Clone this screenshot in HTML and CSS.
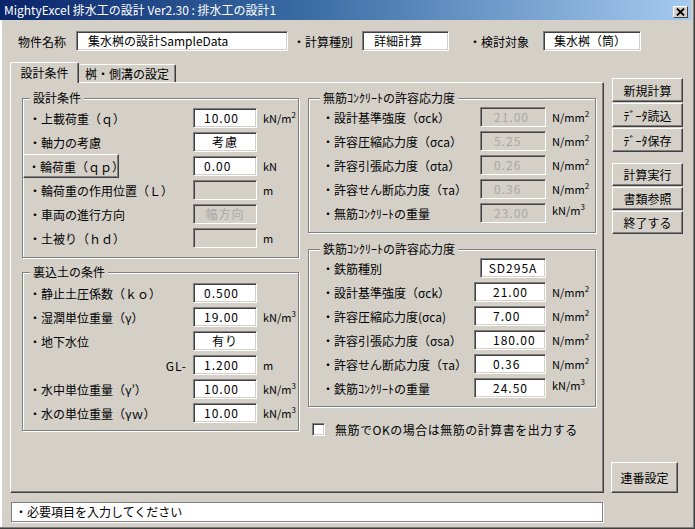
FILE: index.html
```html
<!DOCTYPE html>
<html lang="ja">
<head>
<meta charset="utf-8">
<title>MightyExcel 排水工の設計</title>
<link rel="stylesheet" href="styles.css">
</head>
<body>
<div class="window">
  <div class="titlebar">
    <span class="title">MightyExcel 排水工の設計 Ver2.30 : 排水工の設計1</span>
    <span class="close"><svg width="9" height="8" viewBox="0 0 9 8"><path d="M1 0.5 L8 7.5 M8 0.5 L1 7.5" stroke="#000" stroke-width="1.8" fill="none"/></svg></span>
  </div>

  <div class="header">
    <span class="hl hl1">物件名称</span>
    <span class="hf hf1">集水桝の設計SampleData</span>
    <span class="hl hl2">・計算種別</span>
    <span class="hf hf2">詳細計算</span>
    <span class="hl hl3">・検討対象</span>
    <span class="hf hf3">集水桝（筒）</span>
  </div>

  <div class="body">
    <div class="tabarea">
      <div class="tabs">
        <span class="tab tab-on">設計条件</span>
        <span class="tab tab-off">桝・側溝の設定</span>
      </div>
      <div class="panel">
        <div class="col">
          <div class="group g1">
            <span class="legend">設計条件</span>
            <div class="row r1"><span class="lbl">・上載荷重（ｑ）</span><span class="field num">10.00</span><span class="unit">kN/m<sup>2</sup></span></div>
            <div class="row r1"><span class="lbl">・軸力の考慮</span><span class="field ctr">考慮</span><span class="unit"></span></div>
            <div class="row r1"><span class="btn wbtn">・輪荷重（ｑｐ）</span><span class="field num">0.00</span><span class="unit">kN</span></div>
            <div class="row r1"><span class="lbl">・輪荷重の作用位置（Ｌ）</span><span class="field dis"></span><span class="unit">m</span></div>
            <div class="row r1"><span class="lbl">・車両の進行方向</span><span class="field dis ctr">幅方向</span><span class="unit"></span></div>
            <div class="row r1"><span class="lbl">・土被り（ｈｄ）</span><span class="field dis"></span><span class="unit">m</span></div>
          </div>
          <div class="group g2">
            <span class="legend">裏込土の条件</span>
            <div class="row r1"><span class="lbl">・静止土圧係数（ｋｏ）</span><span class="field num">0.500</span><span class="unit"></span></div>
            <div class="row r1"><span class="lbl">・湿潤単位重量（γ）</span><span class="field num">19.00</span><span class="unit">kN/m<sup>3</sup></span></div>
            <div class="row r1"><span class="lbl">・地下水位</span><span class="field ctr">有り</span><span class="unit"></span></div>
            <div class="row r1"><span class="lbl gl">GL-</span><span class="field num">1.200</span><span class="unit">m</span></div>
            <div class="row r1"><span class="lbl">・水中単位重量（γ’）</span><span class="field num">10.00</span><span class="unit">kN/m<sup>3</sup></span></div>
            <div class="row r1"><span class="lbl">・水の単位重量（γｗ）</span><span class="field num">10.00</span><span class="unit">kN/m<sup>3</sup></span></div>
          </div>
        </div>
        <div class="col">
          <div class="group g3">
            <span class="legend legend-r">無筋ｺﾝｸﾘｰﾄの許容応力度</span>
            <div class="row r3"><span class="lbl lr">・設計基準強度（σck）</span><span class="field dis num3">21.00</span><span class="unit">N/mm<sup>2</sup></span></div>
            <div class="row r3"><span class="lbl lr">・許容圧縮応力度（σca）</span><span class="field dis num3">5.25</span><span class="unit">N/mm<sup>2</sup></span></div>
            <div class="row r3"><span class="lbl lr">・許容引張応力度（σta）</span><span class="field dis num3">0.26</span><span class="unit">N/mm<sup>2</sup></span></div>
            <div class="row r3"><span class="lbl lr">・許容せん断応力度（τa）</span><span class="field dis num3">0.36</span><span class="unit">N/mm<sup>2</sup></span></div>
            <div class="row r3"><span class="lbl lr">・無筋ｺﾝｸﾘｰﾄの重量</span><span class="field dis num3">23.00</span><span class="unit up">kN/m<sup>3</sup></span></div>
          </div>
          <div class="group g4">
            <span class="legend legend-r">鉄筋ｺﾝｸﾘｰﾄの許容応力度</span>
            <div class="row r4"><span class="lbl lr">・鉄筋種別</span><span class="field ctr narrow">SD295A</span><span class="unit"></span></div>
            <div class="row r4"><span class="lbl lr">・設計基準強度（σck）</span><span class="field num4">21.00</span><span class="unit">N/mm<sup>2</sup></span></div>
            <div class="row r4"><span class="lbl lr">・許容圧縮応力度(σca)</span><span class="field num4">7.00</span><span class="unit">N/mm<sup>2</sup></span></div>
            <div class="row r4"><span class="lbl lr">・許容引張応力度（σsa）</span><span class="field num4">180.00</span><span class="unit">N/mm<sup>2</sup></span></div>
            <div class="row r4"><span class="lbl lr">・許容せん断応力度（τa）</span><span class="field num4">0.36</span><span class="unit">N/mm<sup>2</sup></span></div>
            <div class="row r4"><span class="lbl lr">・鉄筋ｺﾝｸﾘｰﾄの重量</span><span class="field num4">24.50</span><span class="unit up">kN/m<sup>3</sup></span></div>
          </div>
          <div class="check">
            <span class="box"></span>
            <span class="ctext">無筋でOKの場合は無筋の計算書を出力する</span>
          </div>
        </div>
      </div>
    </div>

    <div class="side">
      <div class="bgroup bg1">
        <span class="btn sbtn">新規計算</span>
        <span class="btn sbtn">ﾃﾞｰﾀ読込</span>
        <span class="btn sbtn">ﾃﾞｰﾀ保存</span>
      </div>
      <div class="bgroup bg2">
        <span class="btn sbtn2">計算実行</span>
        <span class="btn sbtn2">書類参照</span>
        <span class="btn sbtn2">終了する</span>
      </div>
      <span class="btn renban">連番設定</span>
    </div>
  </div>

  <div class="status">・必要項目を入力してください</div>
</div>
</body>
</html>
```

FILE: styles.css
```css
* { box-sizing: border-box; }

body {
  margin: 0;
  font-family: "Noto Sans CJK JP", "Noto Sans", sans-serif;
  font-size: 12px;
  color: #000;
  background: #d4d0c8;
}

.window {
  width: 695px;
  height: 529px;
  background: #d4d0c8;
  display: flex;
  flex-direction: column;
  overflow: hidden;
  box-shadow: inset -1px -1px 0 #404040, inset -2px -2px 0 #808080, inset 2px 0 0 #ffffff;
}

/* title bar */
.titlebar {
  height: 20px;
  margin-right: 4px;
  background: linear-gradient(to right, #0a246a 0%, #3a6ea5 45%, #a6caf0 100%);
  color: #fff;
  display: flex;
  align-items: flex-start;
  padding-left: 4px;
}
.title {
  flex: 1;
  line-height: 20px;
  white-space: nowrap;
}
.close {
  width: 15px;
  height: 12px;
  margin: 6px 3px 0 0;
  background: #d4d0c8;
  border: 1px solid;
  border-color: #fff #404040 #404040 #fff;
  display: flex;
  align-items: center;
  justify-content: center;
}

/* header */
.header {
  display: flex;
  align-items: center;
  height: 20px;
  margin-top: 11px;
}
.hl { white-space: nowrap; }
.hl1 { margin-left: 18px; }
.hl2 { margin-left: 5px; }
.hl3 { margin-left: 20px; }
.hf {
  height: 20px;
  line-height: 18px;
  background: #fff;
  border: 1px solid;
  border-color: #808080 #fff #fff #808080;
  box-shadow: inset 1px 1px 0 #404040, inset -1px -1px 0 #d4d0c8;
  white-space: nowrap;
}
.hf1 { margin-left: 10px; width: 212px; padding-left: 11px; }
.hf2 { margin-left: 9px; width: 87px; padding-left: 11px; }
.hf3 { margin-left: 14px; width: 98px; padding-left: 10px; }

/* body */
.body {
  display: flex;
  margin-top: 11px;
  height: 431px;
}
.tabarea {
  margin-left: 10px;
  width: 594px;
  display: flex;
  flex-direction: column;
}
.tabs {
  display: flex;
  align-items: flex-end;
  height: 20px;
}
.tab {
  background: #d4d0c8;
  border: 1px solid;
  border-color: #fff #404040 transparent #fff;
  box-shadow: inset -1px 0 0 #808080;
  border-bottom: none;
  text-align: center;
  white-space: nowrap;
  border-radius: 2px 2px 0 0;
}
.tab-on {
  width: 69px;
  height: 21px;
  line-height: 19px;
  margin-bottom: -1px;
  position: relative;
  z-index: 1;
}
.tab-off {
  width: 97px;
  height: 18px;
  line-height: 17px;
  border-left: none;
}

.panel {
  flex: 1;
  border: 1px solid;
  border-color: #fff #404040 #404040 #fff;
  box-shadow: inset -1px -1px 0 #808080;
  display: grid;
  grid-template-columns: 277px 288px;
  column-gap: 9px;
  align-content: start;
  padding: 15px 7px 0 11px;
}
.col {
  display: flex;
  flex-direction: column;
}

/* group boxes */
.group {
  display: flex;
  flex-direction: column;
  border: 1px solid #808080;
  box-shadow: inset 1px 1px 0 #fff, 1px 1px 0 #fff;
}
.legend {
  align-self: flex-start;
  height: 14px;
  line-height: 14px;
  margin: -8px 0 0 7px;
  padding: 0 3px;
  background: #d4d0c8;
  white-space: nowrap;
}
.legend-r { margin-left: 11px; }
.g1 .legend { margin-bottom: 1px; }
.g1 { padding-bottom: 7px; }
.g2 { margin-top: 14px; padding-bottom: 5px; }
.g2 .legend { margin-bottom: 2px; }
.g3 { padding-bottom: 7px; }
.g4 { margin-top: 16px; padding-bottom: 6px; }

.row {
  display: grid;
  height: 24px;
  align-items: center;
  column-gap: 6px;
}
.r1 { grid-template-columns: 164px 64px auto; }
.r3 { grid-template-columns: 165px 66px auto; }
.r4 { grid-template-columns: 159px 72px auto; }

.lbl {
  padding-left: 6px;
  white-space: nowrap;
}
.lr { padding-left: 13px; }
.gl {
  text-align: right;
  padding-right: 0;
  letter-spacing: 1px;
}

.field {
  height: 20px;
  line-height: 18px;
  background: #fff;
  border: 1px solid;
  border-color: #808080 #fff #fff #808080;
  box-shadow: inset 1px 1px 0 #404040, inset -1px -1px 0 #d4d0c8;
  white-space: nowrap;
}
.field.dis {
  background: #d4d0c8;
  color: #a8a8a8;
}
.num { padding-left: 10px; letter-spacing: 1px; }
.num3 { padding-left: 13px; letter-spacing: 1px; }
.num4 { padding-left: 18px; letter-spacing: 1px; }
.ctr { text-align: center; letter-spacing: 1px; }
.narrow { width: 66px; justify-self: end; }

.unit {
  white-space: nowrap;
  font-size: 11px;
}
.unit sup {
  font-size: 8px;
  vertical-align: 5px;
  line-height: 0;
}
.up { align-self: start; padding-top: 1px; }

/* buttons */
.btn {
  background: #d4d0c8;
  border: 1px solid;
  border-color: #fff #404040 #404040 #fff;
  box-shadow: inset -1px -1px 0 #808080;
  display: flex;
  align-items: center;
  justify-content: center;
  white-space: nowrap;
}
.wbtn {
  width: 96px;
  height: 24px;
  justify-content: flex-start;
  padding-left: 4px;
}

/* checkbox */
.check {
  display: flex;
  align-items: center;
  height: 14px;
  margin-top: 15px;
  padding-left: 4px;
}
.box {
  width: 13px;
  height: 13px;
  background: #fff;
  border: 1px solid;
  border-color: #808080 #fff #fff #808080;
  box-shadow: inset 1px 1px 0 #404040, inset -1px -1px 0 #d4d0c8;
}
.ctext {
  margin-left: 10px;
  white-space: nowrap;
  letter-spacing: 0.5px;
}

/* side buttons */
.side {
  margin-left: 8px;
  width: 71px;
  display: flex;
  flex-direction: column;
}
.bgroup {
  display: flex;
  flex-direction: column;
}
.bg1 { margin-top: 16px; gap: 1px; }
.bg2 { margin-top: 11px; gap: 1px; }
.sbtn { height: 24px; }
.sbtn2 { height: 23px; }
.renban {
  margin-top: auto;
  margin-left: -1px;
  width: 67px;
  height: 31px;
}

/* status */
.status {
  margin: 9px 0 0 11px;
  width: 592px;
  height: 20px;
  line-height: 18px;
  background: #fff;
  border: 1px solid #808080;
  box-shadow: 1px 1px 0 #fff;
  padding-left: 3px;
  white-space: nowrap;
}
```
